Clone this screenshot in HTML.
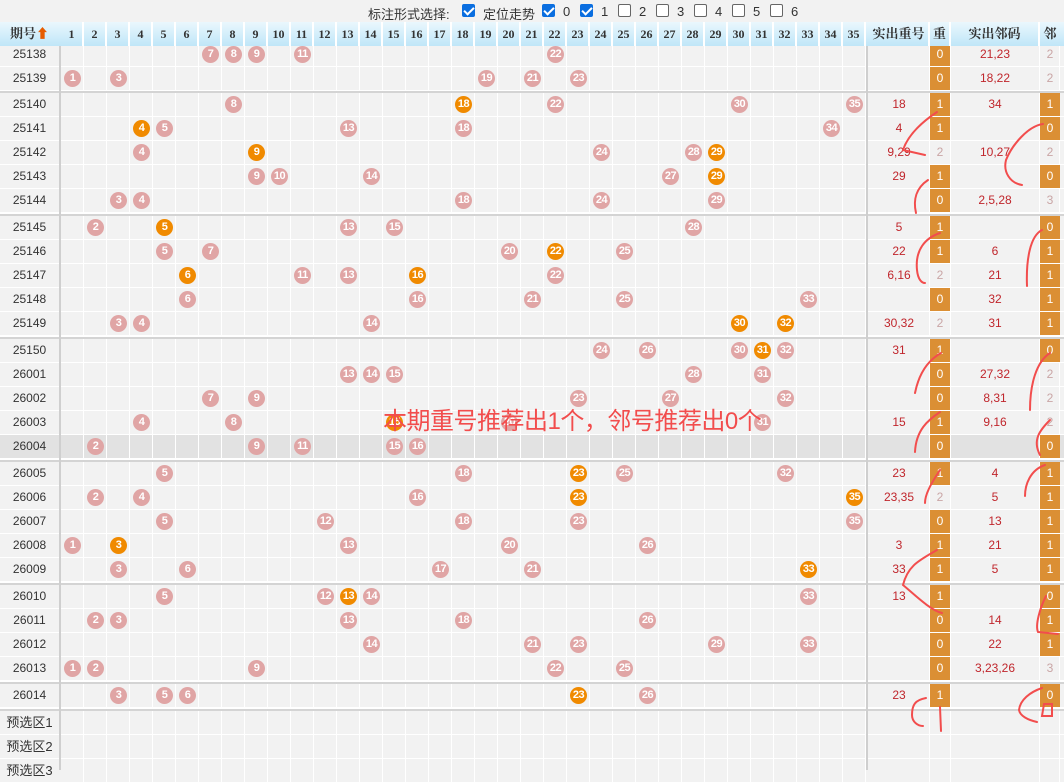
<!DOCTYPE html>
<html><head><meta charset="utf-8"><style>
*{margin:0;padding:0;box-sizing:border-box}
body{width:1064px;height:770px;background:#f2f2f2;position:relative;overflow:hidden;font-family:"Liberation Sans","Noto Sans CJK SC",sans-serif;font-size:12px;color:#333}
.top{position:absolute;top:0;left:0;width:1064px;height:22px;font-size:13px;color:#333}
.top span{position:absolute;top:4px}
.cb{position:absolute;top:4px;width:13px;height:13px;border:1px solid #666;border-radius:2px;background:#fff}
.cb.on{background:#0a6ee0;border-color:#0a6ee0}
.cb.on:after{content:"";position:absolute;left:3px;top:0px;width:4px;height:8px;border:solid #fff;border-width:0 2px 2px 0;transform:rotate(45deg)}
.hd{position:absolute;top:22px;left:0;width:1064px;height:24px;background:linear-gradient(#eaf7fd,#bfe6f8);z-index:3}
.hd div{position:absolute;top:0;height:24px;line-height:24px;text-align:center;font-weight:bold;font-family:"Liberation Serif","Noto Serif CJK SC",serif;font-size:12px;color:#333;border-right:2px solid #fff}
.r{position:absolute;left:0;width:1064px;height:23px;background-color:#f2f2f2;
background-image:repeating-linear-gradient(90deg,transparent 0 22px,#fff 22px 23px),linear-gradient(#fff,#fff),linear-gradient(#fff,#fff),linear-gradient(#fff,#fff),linear-gradient(#fff,#fff);
background-position:61px 0,929px 0,950px 0,1039px 0,1059px 0;background-size:805px 23px,1px 23px,1px 23px,1px 23px,1px 23px;background-repeat:no-repeat}
.r.g{background-color:#e2e2e2}
.r:after{content:"";position:absolute;left:0;right:0;bottom:-1px;height:1px;background:#fff}
.p{position:absolute;left:0;width:59px;height:23px;line-height:23px;text-align:center;font-size:12px;color:#333}
b{position:absolute;top:3px;left:calc(61px + (var(--n) - 1) * 23px + 3px);width:17px;height:17px;border-radius:50%;background:#e0a5a5;color:#fff;font-size:11px;line-height:17px;text-align:center;font-weight:bold;font-family:"Liberation Sans",sans-serif;letter-spacing:-0.5px}
b.o{background:#f08a00}
.c1,.c2,.c3,.c4{position:absolute;top:0;height:23px;line-height:23px;text-align:center;color:#c0262c;font-size:12px}
.c1{left:869px;width:60px}
.c2{left:930px;width:20px;color:#c9a5a5}
.c3{left:951px;width:88px}
.c4{left:1040px;width:20px;color:#c9a5a5}
.c2.o,.c4.o{background:#db8f34;color:#fff}
.sep{position:absolute;left:0;width:1064px;height:3px;background:#d4d4d4;border-top:1px solid #fff}
.vl{position:absolute;top:46px;width:2px;height:724px;background:#cfcfcf;z-index:2}
.note{position:absolute;left:383px;top:401px;font-size:24px;color:#f24d4d;z-index:5;letter-spacing:-0.5px}
svg{position:absolute;left:0;top:0;z-index:6}
</style></head><body>
<div class="top">
<span style="left:368px">标注形式选择:</span>
<i class="cb on" style="left:462px"></i><span style="left:483px">定位走势</span>
<i class="cb on" style="left:542px"></i><span style="left:563px">0</span>
<i class="cb on" style="left:580px"></i><span style="left:601px">1</span>
<i class="cb" style="left:618px"></i><span style="left:639px">2</span>
<i class="cb" style="left:656px"></i><span style="left:677px">3</span>
<i class="cb" style="left:694px"></i><span style="left:715px">4</span>
<i class="cb" style="left:732px"></i><span style="left:753px">5</span>
<i class="cb" style="left:770px"></i><span style="left:791px">6</span>
</div>
<div class="hd">
<div style="left:0;width:59px;border-right:none;font-size:13px">期号<span style="color:#e65c00">⬆</span></div>
<div style="left:61px;width:23px">1</div><div style="left:84px;width:23px">2</div><div style="left:107px;width:23px">3</div><div style="left:130px;width:23px">4</div><div style="left:153px;width:23px">5</div><div style="left:176px;width:23px">6</div><div style="left:199px;width:23px">7</div><div style="left:222px;width:23px">8</div><div style="left:245px;width:23px">9</div><div style="left:268px;width:23px">10</div><div style="left:291px;width:23px">11</div><div style="left:314px;width:23px">12</div><div style="left:337px;width:23px">13</div><div style="left:360px;width:23px">14</div><div style="left:383px;width:23px">15</div><div style="left:406px;width:23px">16</div><div style="left:429px;width:23px">17</div><div style="left:452px;width:23px">18</div><div style="left:475px;width:23px">19</div><div style="left:498px;width:23px">20</div><div style="left:521px;width:23px">21</div><div style="left:544px;width:23px">22</div><div style="left:567px;width:23px">23</div><div style="left:590px;width:23px">24</div><div style="left:613px;width:23px">25</div><div style="left:636px;width:23px">26</div><div style="left:659px;width:23px">27</div><div style="left:682px;width:23px">28</div><div style="left:705px;width:23px">29</div><div style="left:728px;width:23px">30</div><div style="left:751px;width:23px">31</div><div style="left:774px;width:23px">32</div><div style="left:797px;width:23px">33</div><div style="left:820px;width:23px">34</div><div style="left:843px;width:23px">35</div>
<div style="left:869px;width:61px;font-size:13px">实出重号</div><div style="left:930px;width:21px;font-size:13px">重</div><div style="left:951px;width:89px;font-size:13px">实出邻码</div><div style="left:1040px;width:20px;font-size:13px;border:none">邻</div>
</div>
<div class="vl" style="left:59px"></div>
<div class="vl" style="left:866px"></div>

<div class="r" style="top:43px"><div class="p">25138</div><b style="--n:7">7</b><b style="--n:8">8</b><b style="--n:9">9</b><b style="--n:11">11</b><b style="--n:22">22</b><div class="c1"></div><div class="c2 o">0</div><div class="c3">21,23</div><div class="c4">2</div></div>
<div class="r" style="top:67px"><div class="p">25139</div><b style="--n:1">1</b><b style="--n:3">3</b><b style="--n:19">19</b><b style="--n:21">21</b><b style="--n:23">23</b><div class="c2 o">0</div><div class="c3">18,22</div><div class="c4">2</div></div>
<div class="sep" style="top:90px"></div>
<div class="r" style="top:93px"><div class="p">25140</div><b style="--n:8">8</b><b class="o" style="--n:18">18</b><b style="--n:22">22</b><b style="--n:30">30</b><b style="--n:35">35</b><div class="c1">18</div><div class="c2 o">1</div><div class="c3">34</div><div class="c4 o">1</div></div>
<div class="r" style="top:117px"><div class="p">25141</div><b class="o" style="--n:4">4</b><b style="--n:5">5</b><b style="--n:13">13</b><b style="--n:18">18</b><b style="--n:34">34</b><div class="c1">4</div><div class="c2 o">1</div><div class="c3"></div><div class="c4 o">0</div></div>
<div class="r" style="top:141px"><div class="p">25142</div><b style="--n:4">4</b><b class="o" style="--n:9">9</b><b style="--n:24">24</b><b style="--n:28">28</b><b class="o" style="--n:29">29</b><div class="c1">9,29</div><div class="c2">2</div><div class="c3">10,27</div><div class="c4">2</div></div>
<div class="r" style="top:165px"><div class="p">25143</div><b style="--n:9">9</b><b style="--n:10">10</b><b style="--n:14">14</b><b style="--n:27">27</b><b class="o" style="--n:29">29</b><div class="c1">29</div><div class="c2 o">1</div><div class="c4 o">0</div></div>
<div class="r" style="top:189px"><div class="p">25144</div><b style="--n:3">3</b><b style="--n:4">4</b><b style="--n:18">18</b><b style="--n:24">24</b><b style="--n:29">29</b><div class="c2 o">0</div><div class="c3">2,5,28</div><div class="c4">3</div></div>
<div class="sep" style="top:213px"></div>
<div class="r" style="top:216px"><div class="p">25145</div><b style="--n:2">2</b><b class="o" style="--n:5">5</b><b style="--n:13">13</b><b style="--n:15">15</b><b style="--n:28">28</b><div class="c1">5</div><div class="c2 o">1</div><div class="c4 o">0</div></div>
<div class="r" style="top:240px"><div class="p">25146</div><b style="--n:5">5</b><b style="--n:7">7</b><b style="--n:20">20</b><b class="o" style="--n:22">22</b><b style="--n:25">25</b><div class="c1">22</div><div class="c2 o">1</div><div class="c3">6</div><div class="c4 o">1</div></div>
<div class="r" style="top:264px"><div class="p">25147</div><b class="o" style="--n:6">6</b><b style="--n:11">11</b><b style="--n:13">13</b><b class="o" style="--n:16">16</b><b style="--n:22">22</b><div class="c1">6,16</div><div class="c2">2</div><div class="c3">21</div><div class="c4 o">1</div></div>
<div class="r" style="top:288px"><div class="p">25148</div><b style="--n:6">6</b><b style="--n:16">16</b><b style="--n:21">21</b><b style="--n:25">25</b><b style="--n:33">33</b><div class="c2 o">0</div><div class="c3">32</div><div class="c4 o">1</div></div>
<div class="r" style="top:312px"><div class="p">25149</div><b style="--n:3">3</b><b style="--n:4">4</b><b style="--n:14">14</b><b class="o" style="--n:30">30</b><b class="o" style="--n:32">32</b><div class="c1">30,32</div><div class="c2">2</div><div class="c3">31</div><div class="c4 o">1</div></div>
<div class="sep" style="top:336px"></div>
<div class="r" style="top:339px"><div class="p">25150</div><b style="--n:24">24</b><b style="--n:26">26</b><b style="--n:30">30</b><b class="o" style="--n:31">31</b><b style="--n:32">32</b><div class="c1">31</div><div class="c2 o">1</div><div class="c4 o">0</div></div>
<div class="r" style="top:363px"><div class="p">26001</div><b style="--n:13">13</b><b style="--n:14">14</b><b style="--n:15">15</b><b style="--n:28">28</b><b style="--n:31">31</b><div class="c2 o">0</div><div class="c3">27,32</div><div class="c4">2</div></div>
<div class="r" style="top:387px"><div class="p">26002</div><b style="--n:7">7</b><b style="--n:9">9</b><b style="--n:23">23</b><b style="--n:27">27</b><b style="--n:32">32</b><div class="c2 o">0</div><div class="c3">8,31</div><div class="c4">2</div></div>
<div class="r" style="top:411px"><div class="p">26003</div><b style="--n:4">4</b><b style="--n:8">8</b><b class="o" style="--n:15">15</b><b style="--n:20">20</b><b style="--n:31">31</b><div class="c1">15</div><div class="c2 o">1</div><div class="c3">9,16</div><div class="c4">2</div></div>
<div class="r g" style="top:435px"><div class="p">26004</div><b style="--n:2">2</b><b style="--n:9">9</b><b style="--n:11">11</b><b style="--n:15">15</b><b style="--n:16">16</b><div class="c2 o">0</div><div class="c4 o">0</div></div>
<div class="sep" style="top:459px"></div>
<div class="r" style="top:462px"><div class="p">26005</div><b style="--n:5">5</b><b style="--n:18">18</b><b class="o" style="--n:23">23</b><b style="--n:25">25</b><b style="--n:32">32</b><div class="c1">23</div><div class="c2 o">1</div><div class="c3">4</div><div class="c4 o">1</div></div>
<div class="r" style="top:486px"><div class="p">26006</div><b style="--n:2">2</b><b style="--n:4">4</b><b style="--n:16">16</b><b class="o" style="--n:23">23</b><b class="o" style="--n:35">35</b><div class="c1">23,35</div><div class="c2">2</div><div class="c3">5</div><div class="c4 o">1</div></div>
<div class="r" style="top:510px"><div class="p">26007</div><b style="--n:5">5</b><b style="--n:12">12</b><b style="--n:18">18</b><b style="--n:23">23</b><b style="--n:35">35</b><div class="c2 o">0</div><div class="c3">13</div><div class="c4 o">1</div></div>
<div class="r" style="top:534px"><div class="p">26008</div><b style="--n:1">1</b><b class="o" style="--n:3">3</b><b style="--n:13">13</b><b style="--n:20">20</b><b style="--n:26">26</b><div class="c1">3</div><div class="c2 o">1</div><div class="c3">21</div><div class="c4 o">1</div></div>
<div class="r" style="top:558px"><div class="p">26009</div><b style="--n:3">3</b><b style="--n:6">6</b><b style="--n:17">17</b><b style="--n:21">21</b><b class="o" style="--n:33">33</b><div class="c1">33</div><div class="c2 o">1</div><div class="c3">5</div><div class="c4 o">1</div></div>
<div class="sep" style="top:582px"></div>
<div class="r" style="top:585px"><div class="p">26010</div><b style="--n:5">5</b><b style="--n:12">12</b><b class="o" style="--n:13">13</b><b style="--n:14">14</b><b style="--n:33">33</b><div class="c1">13</div><div class="c2 o">1</div><div class="c4 o">0</div></div>
<div class="r" style="top:609px"><div class="p">26011</div><b style="--n:2">2</b><b style="--n:3">3</b><b style="--n:13">13</b><b style="--n:18">18</b><b style="--n:26">26</b><div class="c2 o">0</div><div class="c3">14</div><div class="c4 o">1</div></div>
<div class="r" style="top:633px"><div class="p">26012</div><b style="--n:14">14</b><b style="--n:21">21</b><b style="--n:23">23</b><b style="--n:29">29</b><b style="--n:33">33</b><div class="c2 o">0</div><div class="c3">22</div><div class="c4 o">1</div></div>
<div class="r" style="top:657px"><div class="p">26013</div><b style="--n:1">1</b><b style="--n:2">2</b><b style="--n:9">9</b><b style="--n:22">22</b><b style="--n:25">25</b><div class="c2 o">0</div><div class="c3">3,23,26</div><div class="c4">3</div></div>
<div class="sep" style="top:681px"></div>
<div class="r" style="top:684px"><div class="p">26014</div><b style="--n:3">3</b><b style="--n:5">5</b><b style="--n:6">6</b><b class="o" style="--n:23">23</b><b style="--n:26">26</b><div class="c1">23</div><div class="c2 o">1</div><div class="c4 o">0</div></div>
<div class="sep" style="top:708px"></div>
<div class="r" style="top:711px"><div class="p" style="font-size:13px">预选区1</div></div>
<div class="r" style="top:735px"><div class="p" style="font-size:13px">预选区2</div></div>
<div class="r" style="top:759px"><div class="p" style="font-size:13px">预选区3</div></div>

<div class="note">本期重号推荐出1个，邻号推荐出0个</div>
<svg width="1064" height="770" fill="none" stroke="#f24d4d" stroke-width="2" stroke-linecap="round">
<path d="M937,112 C922,122 908,135 903,150 L925,155"/>
<path d="M1043,124 C1028,126 1012,145 1006,160 C1003,172 1010,183 1022,185"/>
<path d="M928,180 C916,188 913,200 916,213"/>
<path d="M940,233 C925,238 915,250 917,270 C918,280 922,283 925,283"/>
<path d="M1042,230 C1030,236 1026,260 1027,286"/>
<path d="M941,353 C925,362 918,378 915,393"/>
<path d="M1050,353 C1036,362 1030,385 1030,410"/>
<path d="M940,412 C928,420 916,430 915,452"/>
<path d="M1050,420 C1040,430 1032,440 1040,455"/>
<path d="M940,470 C930,485 925,495 925,503"/>
<path d="M1045,465 C1030,470 1025,485 1025,496"/>
<path d="M937,550 C920,560 908,565 903,585 C915,595 930,610 942,613"/>
<path d="M1046,596 C1040,608 1035,625 1038,632 L1058,634"/>
<path d="M926,698 C915,700 912,705 912,715 C912,722 918,726 923,726"/>
<path d="M940,707 L941,731"/>
<path d="M1042,688 C1030,692 1020,700 1019,710 C1020,716 1028,720 1037,722"/>
<path d="M1044,704 L1052,704 L1052,716 L1042,716 Z"/>
</svg>
</body></html>
